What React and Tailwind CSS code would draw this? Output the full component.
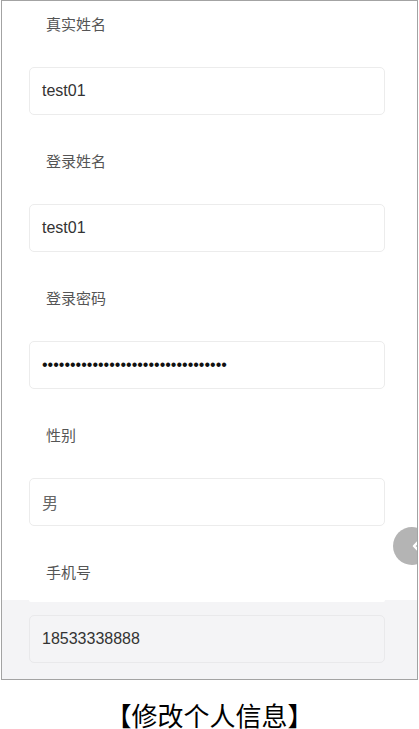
const fields = [
  { label: '真实姓名', value: 'test01' },
  { label: '登录姓名', value: 'test01' },
  { label: '登录密码', value: '•'.repeat(33), dots: true },
  { label: '性别', value: '男', muted: true },
];

const cjk = { fontFamily: '"Noto Sans CJK SC", "Noto Sans", sans-serif' };
const latin = { fontFamily: '"Liberation Sans", "Noto Sans CJK SC", sans-serif' };

function Label({ text }) {
  return (
    <div className="h-[46px] flex items-center pl-[17px] text-[15px] text-[#555]" style={cjk}>
      {text}
    </div>
  );
}

function Box({ value, muted, dots, gray }) {
  return (
    <div
      className={`h-[48px] flex items-center px-[12px] rounded-[5px] border ${
        gray ? 'bg-[#f4f4f6] border-[#e9e9eb]' : 'bg-white border-[#ececec]'
      }`}
    >
      <span
        className={`text-[16px] leading-none ${muted ? 'text-[#666]' : dots ? 'text-[#111]' : 'text-[#333]'}`}
        style={muted ? cjk : latin}
      >
        {value}
      </span>
    </div>
  );
}

export default function App() {
  return (
    <div className="w-[419px] h-[729px] bg-white flex flex-col">
      <div className="relative ml-[1px] w-[417px] h-[680px] border border-[#a3a3a3] overflow-hidden flex flex-col">
        {/* white part */}
        <div className="bg-white pl-[27px] pr-[32px] h-[599px] flex flex-col">
          {fields.map((f) => (
            <div key={f.label} className="flex flex-col">
              <Label text={f.label} />
              <div className="mt-[20px] mb-[23px]">
                <Box value={f.value} muted={f.muted} dots={f.dots} />
              </div>
            </div>
          ))}
          <Label text="手机号" />
        </div>

        {/* gray bottom band */}
        <div className="flex-1 bg-[#f4f4f6] pl-[27px] pr-[32px] flex flex-col">
          <div className="h-[2px] bg-white rounded-b-[4px]" />
          <div className="mt-[13px]">
            <Box value="18533338888" gray />
          </div>
        </div>

        {/* side collapse button */}
        <div className="absolute left-[391px] top-[526px] w-[38px] h-[38px] rounded-full bg-[#b4b4b4] flex items-center">
          <svg className="ml-[19px]" width="8" height="12" viewBox="0 0 8 12" fill="none">
            <path d="M6.5 1.5L2 6l4.5 4.5" stroke="white" strokeWidth="2.4" strokeLinecap="round" strokeLinejoin="round" />
          </svg>
        </div>
      </div>

      <div className="flex-1 flex justify-center pt-[22px]">
        <span className="text-[26px] leading-[26px] text-black" style={cjk}>
          【修改个人信息】
        </span>
      </div>
    </div>
  );
}
